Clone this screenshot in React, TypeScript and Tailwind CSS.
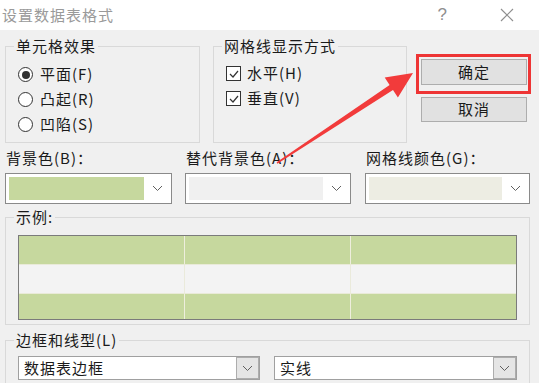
import React from "react";

const FONT = "font-['Noto_Sans_CJK_SC','Noto_Sans',sans-serif]";

function Chevron() {
  return (
    <svg width="11" height="7" viewBox="0 0 11 7" fill="none">
      <polyline points="1,1 5.5,5.5 10,1" stroke="#606060" strokeWidth="1" />
    </svg>
  );
}

function Radio({ label, checked }: { label: string; checked?: boolean }) {
  return (
    <div className="flex items-center h-[25px]">
      <span className="ml-[12px] w-[15px] h-[15px] rounded-full border border-[#333] bg-white flex items-center justify-center">
        {checked && <span className="w-[8px] h-[8px] rounded-full bg-[#333]" />}
      </span>
      <span className="ml-[7px]">{label}</span>
    </div>
  );
}

function Check({ label }: { label: string }) {
  return (
    <div className="flex items-center h-[25px]">
      <span className="ml-[12px] w-[15px] h-[15px] border border-[#333] bg-white flex items-center justify-center">
        <svg width="10" height="8" viewBox="0 0 10 8" fill="none">
          <polyline points="1,4 4,7 9,1" stroke="#333" strokeWidth="1.2" />
        </svg>
      </span>
      <span className="ml-[6px]">{label}</span>
    </div>
  );
}

function ColorCombo({ w, swatch }: { w: string; swatch: string }) {
  return (
    <div className={`${w} h-[31px] border border-[#8a8a8a] bg-white flex items-center pl-[3px]`}>
      <div className={`flex-1 h-[23px] ${swatch}`} />
      <div className="w-[27px] flex justify-center">
        <Chevron />
      </div>
    </div>
  );
}

function TextCombo({ w, text }: { w: string; text: string }) {
  return (
    <div className={`${w} h-[24px] border border-[#a0a0a0] bg-white flex items-stretch`}>
      <span className="flex-1 pl-[5px] leading-[22px]">{text}</span>
      <span className="w-[23px] bg-[#e5e5e5] border border-[#adadad] flex items-center justify-center">
        <Chevron />
      </span>
    </div>
  );
}

function Legend({ children }: { children: React.ReactNode }) {
  return <legend className="ml-[8px] px-[2px] leading-[18px]">{children}</legend>;
}

export default function App() {
  return (
    <div className={`${FONT} relative w-[539px] h-[383px] overflow-hidden bg-[#f0f0f0] text-[15px] tracking-[1px] text-[#1a1a1a]`}>
      {/* title bar */}
      <div className="h-[30px] bg-white flex items-center pl-[2px] text-[#9a9a9a]">
        <span className="flex-1">设置数据表格式</span>
        <span className="mr-[52px] text-[17px] text-[#8f8f8f] font-['Liberation_Sans',sans-serif]">?</span>
        <svg className="mr-[25px]" width="14" height="14" viewBox="0 0 14 14">
          <path d="M1 1 L13 13 M13 1 L1 13" stroke="#8f8f8f" strokeWidth="1.2" />
        </svg>
      </div>

      <div className="px-[5px]">
        {/* top row */}
        <div className="flex items-start mt-[7px]">
          <fieldset className="w-[195px] h-[106px] border border-[#d9d9d9]">
            <Legend>单元格效果</Legend>
            <div className="pt-[7px]">
              <Radio label="平面(F)" checked />
              <Radio label="凸起(R)" />
              <Radio label="凹陷(S)" />
            </div>
          </fieldset>

          <fieldset className="ml-[13px] w-[194px] h-[106px] border border-[#d9d9d9]">
            <Legend>网格线显示方式</Legend>
            <div className="pt-[6px]">
              <Check label="水平(H)" />
              <Check label="垂直(V)" />
            </div>
          </fieldset>

          <div className="ml-[9px] mt-[17px] flex flex-col">
            <div className="w-[115px] h-[40px] border-[3px] border-[#ee3535] pl-[2px] pt-[2px]">
              <button className="w-[106px] h-[26px] bg-[#e1e1e1] border border-[#adadad] tracking-[1px]">确定</button>
            </div>
            <button className="ml-[5px] mt-[3px] w-[106px] h-[25px] bg-[#e1e1e1] border border-[#adadad] tracking-[1px]">取消</button>
          </div>
        </div>

        {/* colour labels */}
        <div className="flex mt-[6px] h-[18px] leading-[18px]">
          <span className="w-[167px] pl-[1px]">背景色(B)：</span>
          <span className="ml-[13px] w-[166px] pl-[1px]">替代背景色(A)：</span>
          <span className="ml-[14px] w-[165px] pl-[1px]">网格线颜色(G)：</span>
        </div>

        {/* colour combos */}
        <div className="flex mt-[6px]">
          <ColorCombo w="w-[167px]" swatch="bg-[#c6d89e]" />
          <div className="ml-[13px]">
            <ColorCombo w="w-[166px]" swatch="bg-[#f0f0f0]" />
          </div>
          <div className="ml-[14px]">
            <ColorCombo w="w-[165px]" swatch="bg-[#edede3]" />
          </div>
        </div>

        {/* sample */}
        <fieldset className="mt-[4px] w-[525px] border border-[#d9d9d9]">
          <Legend>示例:</Legend>
          <div className="pl-[12px] pt-[9px] pb-[4px]">
            <div className="w-[499px] h-[85px] border border-[#7b7b7b] flex flex-col">
              <div className="h-[29px] flex bg-[#c6d89e] border-b border-[#e9ead8]">
                <div className="w-[166px] border-r border-[#eeeedd]" />
                <div className="w-[166px] border-r border-[#eeeedd]" />
                <div className="flex-1" />
              </div>
              <div className="h-[29px] flex bg-[#f3f3f3] border-b border-[#e9ead8]">
                <div className="w-[166px] border-r border-[#eaeadb]" />
                <div className="w-[166px] border-r border-[#eaeadb]" />
                <div className="flex-1" />
              </div>
              <div className="flex-1 flex bg-[#c6d89e]">
                <div className="w-[166px] border-r border-[#eeeedd]" />
                <div className="w-[166px] border-r border-[#eeeedd]" />
                <div className="flex-1" />
              </div>
            </div>
          </div>
        </fieldset>

        {/* border and line style */}
        <fieldset className="mt-[6px] w-[525px] h-[80px] border border-[#d9d9d9]">
          <Legend>边框和线型(L)</Legend>
          <div className="flex pl-[12px] pt-[7px]">
            <TextCombo w="w-[242px]" text="数据表边框" />
            <div className="ml-[14px]">
              <TextCombo w="w-[243px]" text="实线" />
            </div>
          </div>
        </fieldset>
      </div>

      {/* annotation arrow */}
      <svg className="absolute left-0 top-0 pointer-events-none" width="539" height="383" viewBox="0 0 539 383">
        <polygon
          points="276.6,162.3 389.6,84.9 384.7,77.4 413,73 397.9,97.4 393,89.9 277.4,163.7"
          fill="#f23b3b"
        />
      </svg>
    </div>
  );
}
